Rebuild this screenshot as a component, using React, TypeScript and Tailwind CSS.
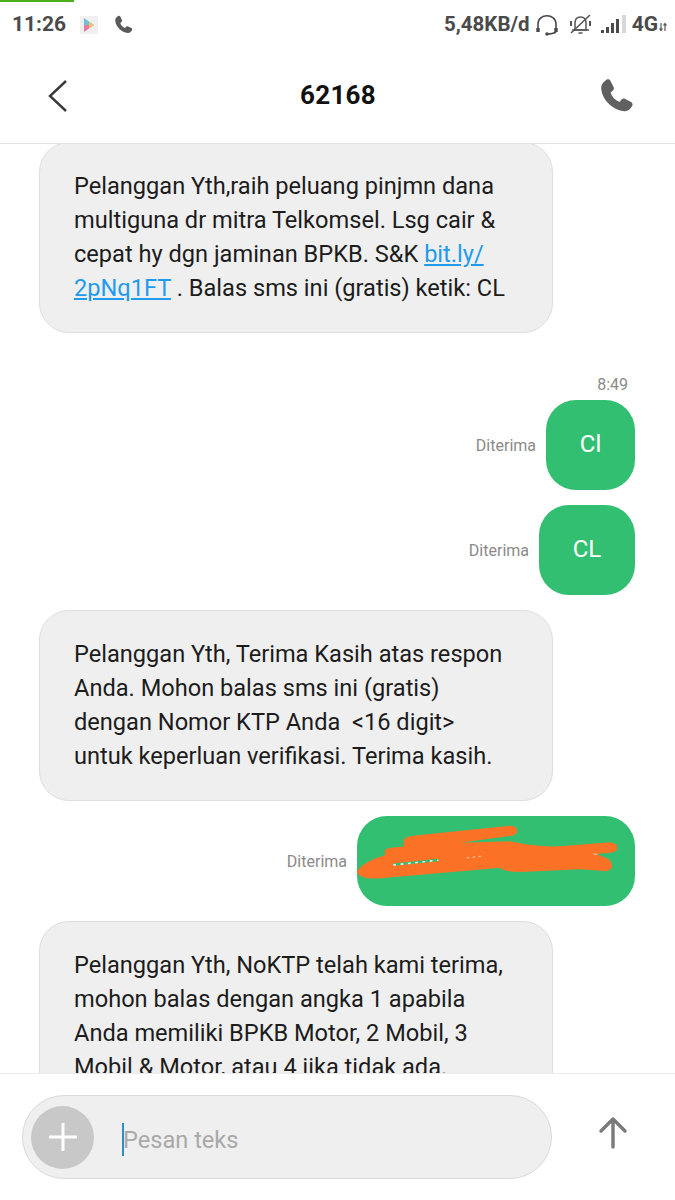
const phonePath =
  "M5.2 1.2 C6.2 .6 7.4 1 7.9 2 L10 6.2 C10.5 7.2 10.2 8.2 9.4 8.8 L7.9 10 C8.9 13 11 15.2 14 16.4 L15.3 14.9 C16 14.1 17 13.9 18 14.4 L22 16.4 C23 17 23.3 18.1 22.8 19.1 C21.6 21.6 19.6 23 17.4 22.8 C9.4 22 2.6 15.2 1.6 8 C1.2 5.2 2.6 2.8 5.2 1.2 Z";

function Bubble({ children }: { children: React.ReactNode }) {
  return (
    <div className="w-[514px] ml-[39px] h-[191px] rounded-[30px] bg-[#efefef] border border-[#dedede] pl-[34px] pt-[26px] text-[23.6px] leading-[34px] text-[#1c1c1c] shrink-0">
      {children}
    </div>
  );
}

function Sent({ width, height, label, children }: { width: string; height: string; label: string; children?: React.ReactNode }) {
  return (
    <div className="flex items-center justify-end pr-[40px] gap-[10px] shrink-0">
      <span className="mt-[1px] text-[16px] text-[#8a8a8a]">{label}</span>
      <div className={`relative flex items-center justify-center pb-[3px] rounded-[30px] bg-[#33bf72] text-white text-[24px] ${width} ${height}`}>
        {children}
      </div>
    </div>
  );
}

export default function App() {
  return (
    <div className="w-[675px] h-[1200px] bg-white flex flex-col overflow-hidden font-['Roboto',sans-serif]">
      {/* status bar */}
      <div className="relative h-[48px] shrink-0 flex items-center justify-between pl-[12px] pr-[8px] pt-[1px]">
        <div className="absolute left-0 top-0 w-[74px] h-[2px] bg-[#4caf1a]" />
        <div className="flex items-center">
          <span className="text-[21px] font-bold text-[#4a4a4a]">11:26</span>
          <span className="ml-[14px] w-[18px] h-[18px] bg-[#f0f0f0] flex items-center justify-center">
            <svg width="12" height="14" viewBox="0 0 12 14">
              <path d="M1 0 L11 7 L1 7 Z" fill="#6fc0d8" />
              <path d="M1 7 L11 7 L1 14 Z" fill="#e87aa0" />
              <path d="M6 3.5 L11 7 L6 10.5 Z" fill="#f3c46a" />
            </svg>
          </span>
          <svg className="ml-[16px]" width="19" height="19" viewBox="0 0 24 24" fill="#5a5a5a">
            <path d={phonePath} />
          </svg>
        </div>
        <div className="flex items-center text-[#4a4a4a]">
          <span className="text-[20.5px] font-bold">5,48KB/d</span>
          <svg className="ml-[5px]" width="24" height="22" viewBox="0 0 24 22" fill="none" stroke="#4a4a4a" strokeWidth="1.6">
            <path d="M3 16 V10 C3 -1 21 -1 21 10 V16" />
            <path d="M3 14 V18 M21 14 V18" strokeWidth="3.4" />
            <path d="M21 18 Q18 20 12 20" />
            <circle cx="12" cy="20" r="1" fill="#4a4a4a" />
          </svg>
          <svg className="ml-[10px]" width="23" height="23" viewBox="0 0 23 23" fill="none" stroke="#555" strokeWidth="1.5">
            <path d="M6 17 V10 C6 6 8 4 11.5 4 C15 4 17 6 17 10 V17 Z" />
            <path d="M3 17 H20 M9.5 20 H13.5" />
            <path d="M2 20 L21 2" />
            <path d="M2 8 V13 M21 8 V13" strokeWidth="2" />
          </svg>
          <svg className="ml-[9px]" width="26" height="20" viewBox="0 0 26 20" fill="#4a4a4a">
            <rect x="0" y="15" width="3" height="3" />
            <rect x="5" y="12" width="3" height="6" />
            <rect x="10" y="8" width="3" height="10" />
            <rect x="15" y="4" width="3" height="14" />
            <rect x="21" y="0" width="4" height="18" fill="#d8d8d8" />
          </svg>
          <span className="ml-[5px] text-[21px] font-bold">4G</span>
          <svg className="ml-[1px] mt-[5px]" width="8" height="10" viewBox="0 0 8 10" fill="none" stroke="#555" strokeWidth="1.2">
            <path d="M2 1 V8 M0.5 6.5 L2 8.5 L3.5 6.5 M6 9 V2 M4.5 3.5 L6 1.5 L7.5 3.5" />
          </svg>
        </div>
      </div>

      {/* header */}
      <div className="relative z-10 h-[96px] shrink-0 bg-white border-b border-[#e2e2e2] flex items-center justify-between pl-[48px] pr-[41px]">
        <svg width="20" height="34" viewBox="0 0 20 34" fill="none" stroke="#3a3a3a" strokeWidth="2.4">
          <path d="M18 2 L2 17 L18 32" />
        </svg>
        <span className="ml-[9px] text-[26px] font-bold text-[#111] tracking-[0.3px]">62168</span>
        <svg width="35" height="35" viewBox="0 0 24 24" fill="#606060">
          <path d={phonePath} />
        </svg>
      </div>

      {/* messages */}
      <div className="flex-1 min-h-0 overflow-hidden flex flex-col -mt-[2px]">
        <Bubble>
          Pelanggan Yth,raih peluang pinjmn dana
          <br />
          multiguna dr mitra Telkomsel. Lsg cair &amp;
          <br />
          cepat hy dgn jaminan BPKB. S&amp;K <span className="text-[#1e9bef] underline">bit.ly/</span>
          <br />
          <span className="text-[#1e9bef] underline">2pNq1FT</span> . Balas sms ini (gratis) ketik: CL
        </Bubble>
        <div className="mt-[43px] pr-[47px] text-right text-[16px] leading-[18px] text-[#8a8a8a] shrink-0">8:49</div>
        <div className="mt-[6px]">
          <Sent width="w-[89px]" height="h-[90px]" label="Diterima">Cl</Sent>
        </div>
        <div className="mt-[15px]">
          <Sent width="w-[96px]" height="h-[90px]" label="Diterima">CL</Sent>
        </div>
        <div className="mt-[15px]">
          <Bubble>
            Pelanggan Yth, Terima Kasih atas respon
            <br />
            Anda. Mohon balas sms ini (gratis)
            <br />
            dengan Nomor KTP Anda &nbsp;&lt;16 digit&gt;
            <br />
            untuk keperluan verifikasi. Terima kasih.
          </Bubble>
        </div>
        <div className="mt-[15px]">
          <Sent width="w-[278px]" height="h-[90px]" label="Diterima">
            <svg className="absolute left-[-77px] top-[-16px]" width="395" height="120" viewBox="0 0 1185 360">
              <path
                fill="#fb7227"
                d="M230 215 C250 185 290 175 315 165 L315 150 Q320 142 370 140 L372 118 Q380 108 420 105 L690 77 Q712 78 712 92 Q712 105 690 108 L540 128 L690 124 C740 135 800 142 850 138 L990 127 Q1012 130 1012 143 Q1012 157 990 158 L950 162 L985 177 Q1000 190 995 205 Q985 217 965 212 L900 208 L720 216 Q670 215 660 203 L560 212 L300 235 Q240 240 230 215 Z"
              />
              <path d="M340 194 L475 180" stroke="#33bf72" strokeWidth="7" />
              <path d="M340 195 L475 181" stroke="#fff" strokeWidth="4" strokeDasharray="8 14" />
              <path d="M560 174 L608 168" stroke="#fff" strokeWidth="2" strokeDasharray="8 10" />
              <path d="M940 162 L952 163" stroke="#fff" strokeWidth="2" />
            </svg>
          </Sent>
        </div>
        <div className="mt-[15px]">
          <Bubble>
            Pelanggan Yth, NoKTP telah kami terima,
            <br />
            mohon balas dengan angka 1 apabila
            <br />
            Anda memiliki BPKB Motor, 2 Mobil, 3
            <br />
            Mobil &amp; Motor, atau 4 jika tidak ada.
          </Bubble>
        </div>
      </div>

      {/* input bar */}
      <div className="h-[127px] shrink-0 bg-white border-t border-[#ececec] flex items-start pt-[21px] pl-[22px]">
        <div className="w-[530px] h-[84px] rounded-[42px] bg-[#efefef] border border-[#d9d9d9] flex items-center pl-[8px]">
          <div className="w-[63px] h-[63px] rounded-full bg-[#c8c8c8] flex items-center justify-center">
            <svg width="28" height="28" viewBox="0 0 28 28" stroke="#fff" strokeWidth="3" strokeLinecap="round">
              <path d="M14 1 V27 M1 14 H27" />
            </svg>
          </div>
          <div className="ml-[28px] mt-[4px] w-[2px] h-[33px] bg-[#2a8fc4]" />
          <span className="-ml-[1px] mt-[8px] text-[23.6px] text-[#a9a9a9]">Pesan teks</span>
        </div>
        <svg className="ml-[46px] mt-[21px]" width="30" height="33" viewBox="0 0 30 33" fill="none" stroke="#7a7a7a" strokeWidth="3.4" strokeLinecap="round" strokeLinejoin="round">
          <path d="M15 31 V3 M3 15 L15 3 L27 15" />
        </svg>
      </div>
    </div>
  );
}
